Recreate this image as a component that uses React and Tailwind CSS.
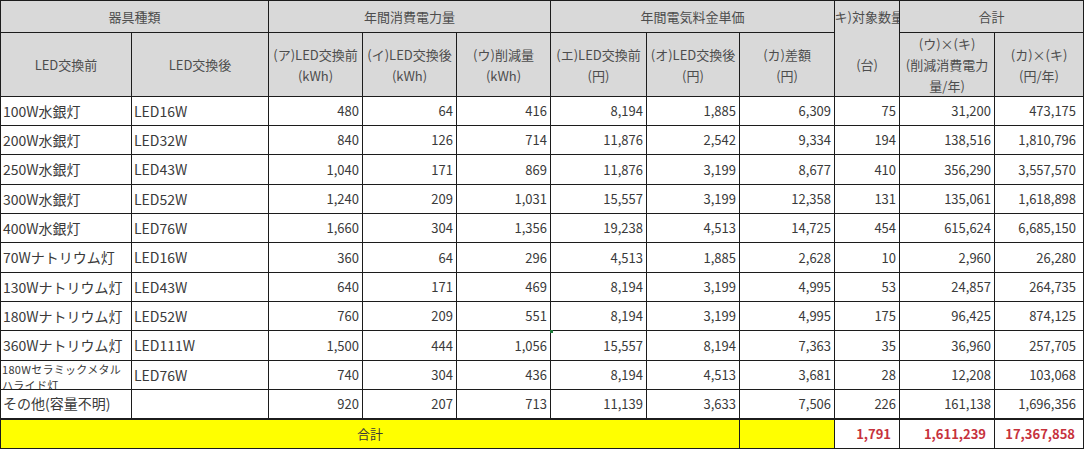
const rows = [
  ['100W水銀灯', 'LED16W', '480', '64', '416', '8,194', '1,885', '6,309', '75', '31,200', '473,175'],
  ['200W水銀灯', 'LED32W', '840', '126', '714', '11,876', '2,542', '9,334', '194', '138,516', '1,810,796'],
  ['250W水銀灯', 'LED43W', '1,040', '171', '869', '11,876', '3,199', '8,677', '410', '356,290', '3,557,570'],
  ['300W水銀灯', 'LED52W', '1,240', '209', '1,031', '15,557', '3,199', '12,358', '131', '135,061', '1,618,898'],
  ['400W水銀灯', 'LED76W', '1,660', '304', '1,356', '19,238', '4,513', '14,725', '454', '615,624', '6,685,150'],
  ['70Wナトリウム灯', 'LED16W', '360', '64', '296', '4,513', '1,885', '2,628', '10', '2,960', '26,280'],
  ['130Wナトリウム灯', 'LED43W', '640', '171', '469', '8,194', '3,199', '4,995', '53', '24,857', '264,735'],
  ['180Wナトリウム灯', 'LED52W', '760', '209', '551', '8,194', '3,199', '4,995', '175', '96,425', '874,125'],
  ['360Wナトリウム灯', 'LED111W', '1,500', '444', '1,056', '15,557', '8,194', '7,363', '35', '36,960', '257,705'],
  ['180Wセラミックメタルハライド灯', 'LED76W', '740', '304', '436', '8,194', '4,513', '3,681', '28', '12,208', '103,068'],
  ['その他(容量不明)', '', '920', '207', '713', '11,139', '3,633', '7,506', '226', '161,138', '1,696,356'],
];

const heights = ['h-[29px]', 'h-[29px]', 'h-[30px]', 'h-[29px]', 'h-[29px]', 'h-[30px]', 'h-[29px]', 'h-[29px]', 'h-[30px]', 'h-[29px]', 'h-[29px]'];
const widths = ['w-[131px]', 'w-[137px]', 'w-[94px]', 'w-[94px]', 'w-[94px]', 'w-[96px]', 'w-[93px]', 'w-[95px]', 'w-[65px]', 'w-[95px]', 'w-[89px]'];

const cell = 'border border-[#1c1c1c] p-0';
const head = `${cell} bg-[#d9d9d9] text-[#4d4d4d] text-center font-normal text-[13px] leading-[21px]`;

function Num({ v, last, mark }) {
  return (
    <td className={`${cell} relative text-right ${last ? 'pr-[7px]' : 'pr-[3px]'} text-[13px]`}>
      {mark && <span className="absolute -left-[1px] -top-[1px] w-[3px] h-[3px] bg-[#1e7b3c]" />}
      {v}
    </td>
  );
}

export default function App() {
  return (
    <div className="w-[1086px] h-[450px] bg-white overflow-hidden" style={{ fontFamily: '"Noto Sans CJK JP", "Noto Sans", sans-serif' }}>
      <table className="table-fixed border-collapse w-[1083px] text-[#3a3a3a]">
        <colgroup>
          {widths.map((w, i) => <col key={i} className={w} />)}
        </colgroup>
        <thead>
          <tr className="h-[32px]">
            <th colSpan={2} className={head}>器具種類</th>
            <th colSpan={3} className={head}>年間消費電力量</th>
            <th colSpan={3} className={head}>年間電気料金単価</th>
            <th rowSpan={2} className={`${head} align-top`}>
              <div className="flex flex-col h-[95px]">
                <div className="h-[31px] flex items-center justify-center overflow-hidden whitespace-nowrap">(キ)対象数量</div>
                <div className="flex-1 flex items-center justify-center">(台)</div>
              </div>
            </th>
            <th colSpan={2} className={head}>合計</th>
          </tr>
          <tr className="h-[64px]">
            <th className={head}>LED交換前</th>
            <th className={head}>LED交換後</th>
            <th className={head}>(ア)LED交換前<br />(kWh)</th>
            <th className={head}>(イ)LED交換後<br />(kWh)</th>
            <th className={head}>(ウ)削減量<br />(kWh)</th>
            <th className={head}>(エ)LED交換前<br />(円)</th>
            <th className={head}>(オ)LED交換後<br />(円)</th>
            <th className={head}>(カ)差額<br />(円)</th>
            <th className={head}>(ウ)×(キ)<br />(削減消費電力<br />量/年)</th>
            <th className={head}>(カ)×(キ)<br />(円/年)</th>
          </tr>
        </thead>
        <tbody>
          {rows.map((r, i) => (
            <tr key={i} className={heights[i]}>
              {i === 9 ? (
                <td className={`${cell} align-top`}>
                  <div className="h-[28px] overflow-hidden pl-[1px] text-[11px] leading-[16px] tracking-[0.3px]">
                    180Wセラミックメタル<br />ハライド灯
                  </div>
                </td>
              ) : (
                <td className={`${cell} pl-[2px] text-[14px] whitespace-nowrap`}>{r[0]}</td>
              )}
              <td className={`${cell} pl-[2px] text-[14px]`}>{r[1]}</td>
              {r.slice(2).map((v, j) => (
                <Num key={j} v={v} last={j === 8} mark={i === 8 && j === 3} />
              ))}
            </tr>
          ))}
          <tr className="h-[30px]">
            <td colSpan={7} className={`${cell} border-t-2 bg-[#ffff00] text-center text-[13px]`}>合計</td>
            <td className={`${cell} border-t-2 bg-[#ffff00]`} />
            <td className={`${cell} border-t-2 text-right pr-[8px] text-[13px] font-bold text-[#c7323c]`}>1,791</td>
            <td className={`${cell} border-t-2 text-right pr-[8px] text-[13px] font-bold text-[#c7323c]`}>1,611,239</td>
            <td className={`${cell} border-t-2 text-right pr-[8px] text-[13px] font-bold text-[#c7323c]`}>17,367,858</td>
          </tr>
        </tbody>
      </table>
    </div>
  );
}
